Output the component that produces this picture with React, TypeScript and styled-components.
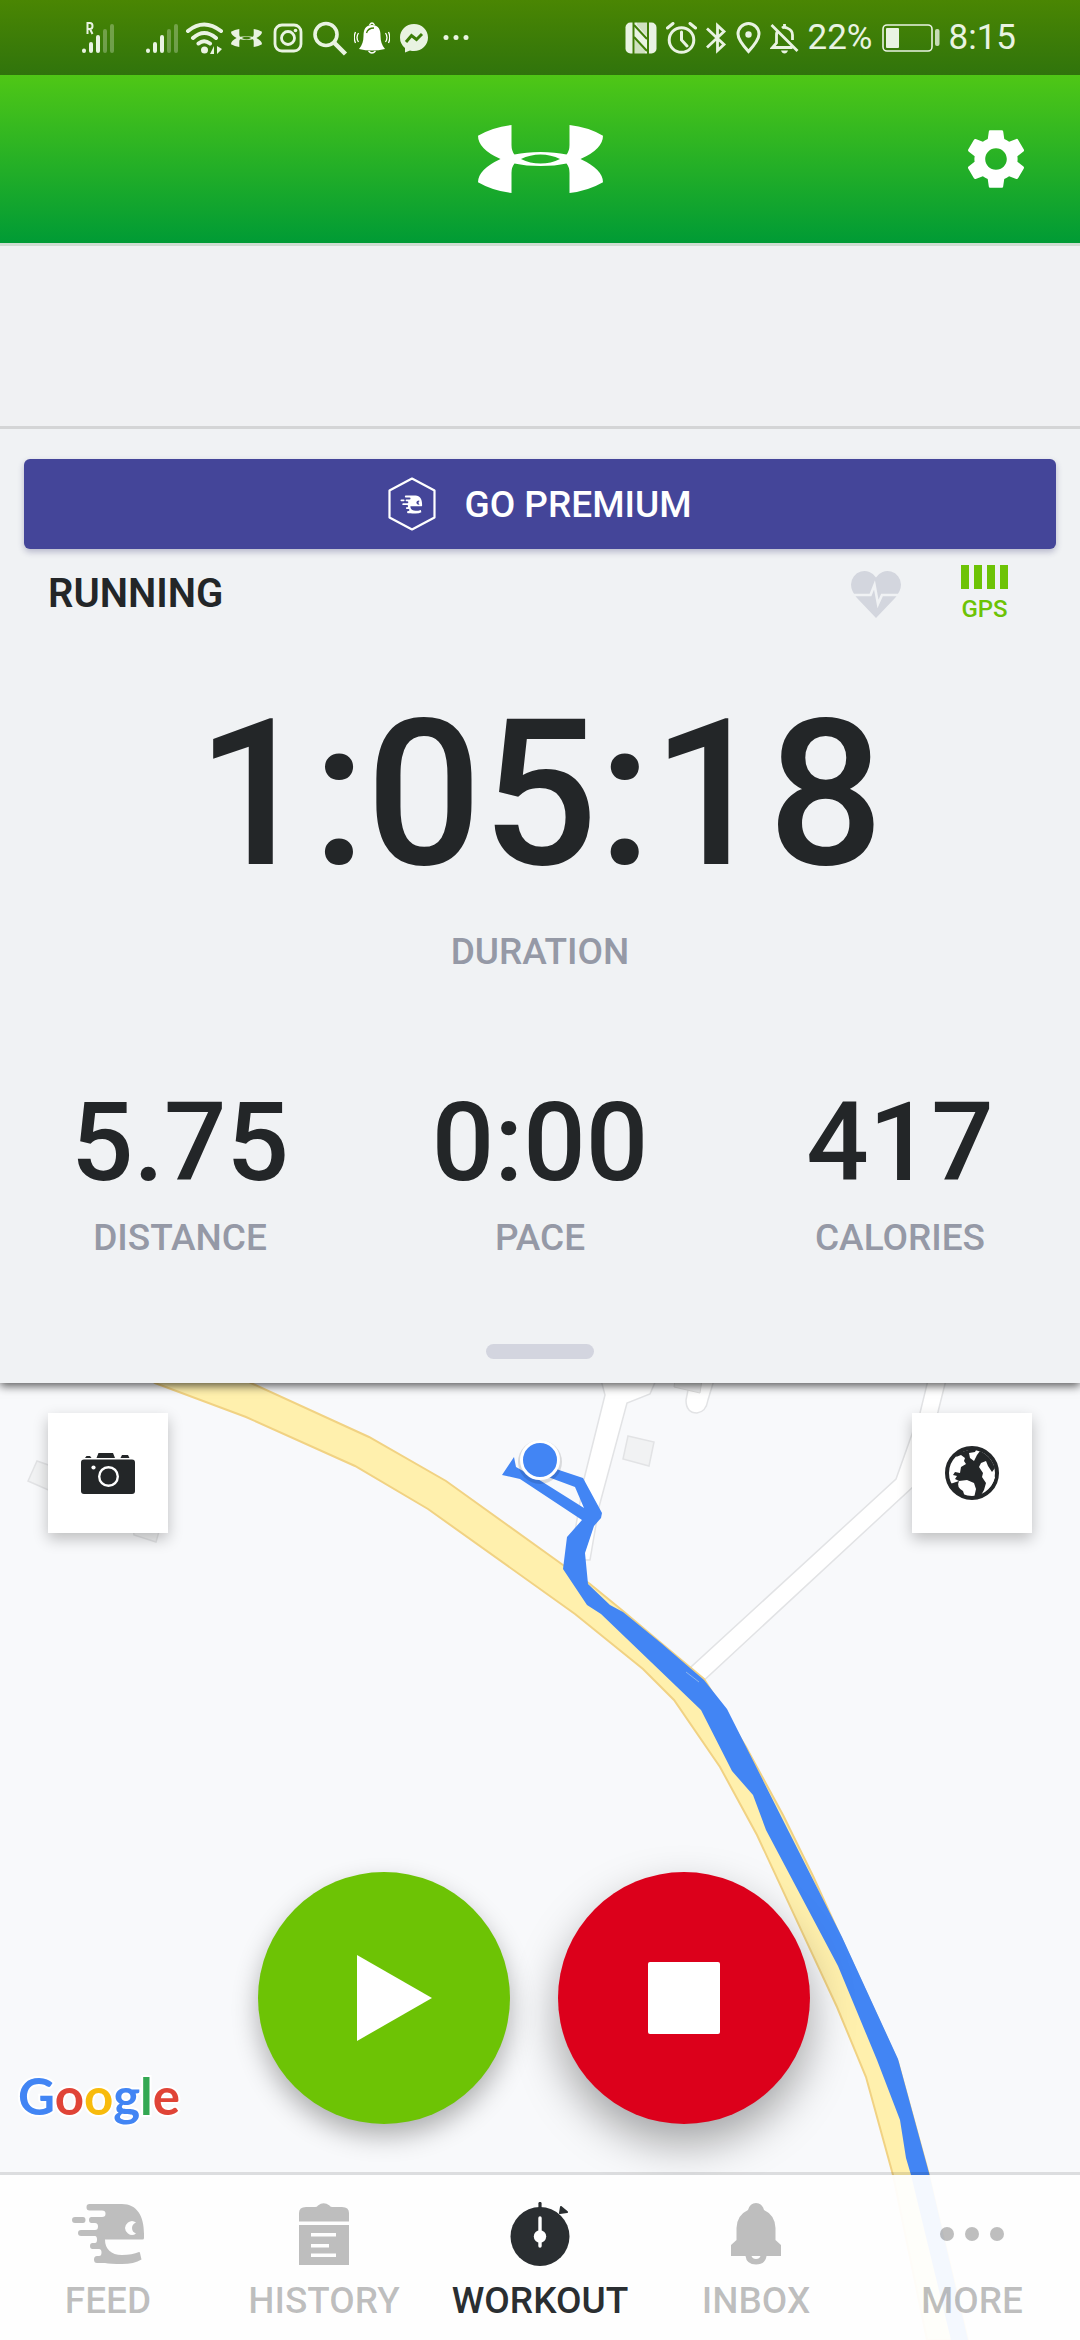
import React from "react";
import styled, { createGlobalStyle } from "styled-components";
import { MdSettings } from "react-icons/md";

const GlobalStyle = createGlobalStyle`
  *, *::before, *::after { box-sizing: border-box; }
  body { margin: 0; background: #f8f9fb; font-family: Roboto, "Liberation Sans", sans-serif; }
  button { font-family: inherit; border: 0; padding: 0; background: none; cursor: pointer; }
  svg { display: block; flex: none; }
`;

const ink = "#232628";
const muted = "#9599a6";
const green = "#6dc305";

const Page = styled.div`
  display: flex;
  flex-direction: column;
  min-height: 100vh;
  color: ${ink};
`;

const StatusBar = styled.div`
  display: flex;
  align-items: center;
  justify-content: space-between;
  height: 75px;
  padding: 0 64px 0 77px;
  background: linear-gradient(#4a8603, #30740c);
  color: #e9f3e2;
`;

const StatusLeft = styled.div`
  display: flex;
  align-items: center;
`;

const StatusCell = styled.span<{ $wide?: boolean }>`
  display: flex;
  justify-content: center;
  width: ${(p) => (p.$wide ? 64 : 42)}px;
  padding-right: ${(p) => (p.$wide ? 22 : 0)}px;
`;

const StatusRight = styled.div`
  display: flex;
  align-items: center;
  gap: 9px;
  font-size: 35px;
  line-height: 44px;
`;

const Header = styled.header`
  display: grid;
  grid-template-columns: 1fr auto 1fr;
  align-items: center;
  height: 171px;
  padding: 0 48px;
  background: linear-gradient(#4fc716, #009b35);
  background-clip: padding-box;
  border-bottom: 3px solid #cfdcd2;
  color: #fff;
`;

const SettingsButton = styled.button`
  grid-column: 3;
  justify-self: end;
  color: inherit;
`;

const HeaderLogo = styled.span`
  grid-column: 2;
`;

const AdSlot = styled.div`
  position: relative;
  z-index: 2;
  height: 183px;
  background: #f0f1f3;
  border-bottom: 3px solid #d4d5d6;
`;

const Panel = styled.section`
  position: relative;
  z-index: 1;
  display: flex;
  flex-direction: column;
  padding: 30px 0 24px;
  background: #f0f2f4;
  box-shadow: 0 3px 9px rgba(0, 0, 0, 0.65);
  clip-path: inset(0 0 -20px 0);
`;

const PremiumButton = styled.button`
  display: flex;
  align-items: center;
  justify-content: center;
  gap: 28px;
  height: 90px;
  margin: 0 24px;
  border-radius: 6px;
  background: #444599;
  color: #fff;
  font-size: 37px;
  font-weight: 500;
  box-shadow: 0 3px 6px rgba(50, 50, 110, 0.3);
`;

const ActivityRow = styled.div`
  display: flex;
  align-items: center;
  padding: 16px 72px 0 48px;
`;

const ActivityName = styled.h1`
  flex: 1;
  margin: 0;
  font-size: 40px;
  font-weight: 600;
  line-height: 56px;
`;

const Gps = styled.div`
  display: flex;
  flex-direction: column;
  align-items: center;
  gap: 6px;
  margin-left: 60px;
  color: ${green};
  font-size: 24px;
  font-weight: 500;
  line-height: 28px;
`;

const GpsBars = styled.div`
  display: flex;
  gap: 5px;
`;

const GpsBar = styled.i`
  width: 8px;
  height: 24px;
  background: currentColor;
`;

const Stat = styled.div<{ $main?: boolean }>`
  display: flex;
  flex-direction: column;
  align-items: center;
  gap: ${(p) => (p.$main ? 35 : 13)}px;
  margin-top: ${(p) => (p.$main ? 72 : 0)}px;
`;

const StatValue = styled.strong<{ $main?: boolean }>`
  font-size: ${(p) => (p.$main ? 204 : 110)}px;
  line-height: ${(p) => (p.$main ? 200 : 120)}px;
  font-weight: 500;
`;

const StatLabel = styled.span`
  color: ${muted};
  font-size: 37px;
  font-weight: 500;
  line-height: 44px;
`;

const StatsRow = styled.div`
  display: grid;
  grid-template-columns: repeat(3, 1fr);
  margin-top: 109px;
`;

const Handle = styled.div`
  align-self: center;
  width: 108px;
  height: 15px;
  margin-top: 84px;
  border-radius: 8px;
  background: #d3d5df;
`;

const MapArea = styled.main`
  position: relative;
  flex: 1;
  display: flex;
  flex-direction: column;
`;

const MapCanvas = styled.svg`
  position: absolute;
  inset: 0;
  width: 100%;
  height: 100%;
`;

const MapTools = styled.div`
  position: relative;
  display: flex;
  justify-content: space-between;
  padding: 30px 48px;
`;

const ToolButton = styled.button`
  display: grid;
  place-items: center;
  width: 120px;
  height: 120px;
  background: #fff;
  color: ${ink};
  box-shadow: 0 6px 14px rgba(0, 0, 0, 0.24);
`;

const Controls = styled.div`
  position: relative;
  display: flex;
  justify-content: center;
  gap: 48px;
  margin-top: auto;
  padding: 0 12px 48px 0;
`;

const RoundButton = styled.button<{ $color: string; $raised?: boolean }>`
  display: grid;
  place-items: center;
  width: 252px;
  height: 252px;
  border-radius: 50%;
  background: ${(p) => p.$color};
  box-shadow: ${(p) =>
    p.$raised ? "0 20px 44px rgba(0, 0, 0, 0.34)" : "0 12px 26px rgba(0, 0, 0, 0.3)"};
`;

const MapCredit = styled.span`
  position: absolute;
  left: 18px;
  bottom: 214px;
  font-family: Lato, "Liberation Sans", sans-serif;
  font-size: 51px;
  font-weight: 700;
  line-height: 60px;
  paint-order: stroke;
  -webkit-text-stroke: 4px #fff;
`;

const Letter = styled.span<{ $color: string }>`
  color: ${(p) => p.$color};
`;

const Nav = styled.nav`
  position: relative;
  display: grid;
  grid-template-columns: repeat(5, 1fr);
  height: 168px;
  border-top: 3px solid rgba(0, 0, 0, 0.11);
  background: rgba(254, 254, 254, 0.95);
  background-clip: padding-box;
`;

const NavItem = styled.button<{ $active?: boolean }>`
  display: flex;
  flex-direction: column;
  align-items: center;
  gap: 8px;
  padding-top: 22px;
  color: ${(p) => (p.$active ? "#2a2e31" : "rgba(0, 0, 0, 0.25)")};
  font-size: 37px;
  font-weight: 500;
  line-height: 44px;
`;

const MarkPath =
  "M0 10.7Q15 2 33.5 0V20Q33.5 26 36.5 29.5Q48 27 62.5 27T88.5 29.5Q91.5 26 91.5 20V0Q110 2 125 10.7Q125 24 102.5 34Q125 44.500 125 57.300Q110 66 91.500 68V48Q91.500 42 88.500 38.500Q77 41 62.500 41T36.500 38.500Q33.500 42 33.500 48V68Q15 66 0 57.300Q0 44.500 22.500 34Q0 24 0 10.700ZM43 34Q52 38.500 62.500 38.500T82 34Q73 29.500 62.500 29.500T43 34Z";

const Mark = ({ width, height }: { width: number; height: number }) => (
  <svg width={width} height={height} viewBox="0 0 125 68" preserveAspectRatio="none" fill="currentColor" fillRule="evenodd">
    <path d={MarkPath} />
  </svg>
);

const Signal = ({ roaming }: { roaming?: boolean }) => (
  <svg width="36" height="34" viewBox="0 0 36 34" stroke="currentColor" strokeWidth="4" strokeLinecap="round">
    <path d="M4 29.500V30M11 23V30M18 16V30" />
    <path d="M25 10V30M32 5V30" opacity=".3" />
    {roaming && <path d="M7.500 13V2H10Q12.500 2 12.500 5T10 8H8M10 8L12.500 13" fill="none" strokeWidth="2" strokeLinecap="butt" />}
  </svg>
);

const Wifi = () => (
  <svg width="40" height="34" viewBox="0 0 40 34" fill="none" stroke="currentColor" strokeWidth="4" strokeLinecap="round">
    <path d="M4 10Q20-3 37 10M9 17Q20 7 32 17M14.500 22.500Q20 18 26 22.500" />
    <circle cx="20.500" cy="29" r="3.500" fill="currentColor" stroke="none" />
    <path d="M30 25V33H26ZM33 25V33L38 28Z" fill="currentColor" stroke="none" />
  </svg>
);

const Camera = () => (
  <svg width="30" height="30" viewBox="0 0 30 30" fill="none" stroke="currentColor" strokeWidth="2.800">
    <rect x="2" y="2" width="26" height="26" rx="7" />
    <circle cx="15" cy="15" r="6.500" />
    <circle cx="22.500" cy="7.500" r="1.800" fill="currentColor" stroke="none" />
  </svg>
);

const Search = () => (
  <svg width="36" height="36" viewBox="0 0 36 36" fill="none" stroke="currentColor" strokeWidth="3.600">
    <circle cx="14" cy="14.500" r="11" />
    <path d="M22 22.500L33.500 34" strokeWidth="4.500" />
  </svg>
);

const RingingBell = () => (
  <svg width="36" height="32" viewBox="0 0 36 32" fill="#fff">
    <path d="M18 3C25 3 26.500 8 26.500 14Q26.500 22 31 27Q18 30 5 27Q9.500 22 9.500 14C9.500 8 11 3 18 3Z" />
    <path d="M15.500 3Q18-1 20.500 3M14.500 29Q18 33 21.500 29M4.500 11Q1.500 15.500 4.500 20M1.500 10Q-1 15.500 1.500 21M31.500 11Q34.500 15.500 31.500 20M34.500 10Q37 15.500 34.500 21" fill="none" stroke="#fff" strokeWidth="1.300" />
    <path d="M12.500 11Q14 6 20 6" fill="none" stroke="#427f05" strokeWidth="1.300" />
  </svg>
);

const Messenger = () => (
  <svg width="30" height="30" viewBox="0 0 30 30" fill="currentColor">
    <path d="M15 1C23 1 29 7 29 14.500S23 28 15 28Q13 28 11 27.500L6 29.500V25Q1 21 1 14.500C1 7 7 1 15 1Z" />
    <path d="M7 19L12.500 12.500L17.500 16.500L23 11" fill="none" stroke="#3c7d08" strokeWidth="3" />
  </svg>
);

const Ellipsis = ({ width, r, gap }: { width: number; r: number; gap: number }) => (
  <svg width={width} height={r * 2} viewBox={`0 0 ${width} ${r * 2}`} fill="currentColor">
    {[-1, 0, 1].map((n) => (
      <circle key={n} cx={width / 2 + n * gap} cy={r} r={r} />
    ))}
  </svg>
);

const Nfc = () => (
  <svg width="32" height="32" viewBox="0 0 32 32">
    <rect x=".5" y=".5" width="31" height="31" rx="5" fill="currentColor" />
    <path d="M8.500 0V32M23 0V32" stroke="#407e07" strokeWidth="2" fill="none" />
    <path d="M9 3L22 17M9 15L22 29" stroke="#407e07" strokeWidth="2" fill="none" />
    <path d="M9.500 17L20 28V32H9.500ZM12 0H22V14L12 3Z" fill="#407e07" opacity=".15" />
  </svg>
);

const Alarm = () => (
  <svg width="31" height="32" viewBox="0 0 31 32" fill="none" stroke="currentColor" strokeWidth="3">
    <circle cx="15.500" cy="18" r="12.300" />
    <path d="M15.500 10V18L21 24M1.500 6L7 1.500M29.500 6L24 1.500" strokeLinecap="round" />
  </svg>
);

const Bluetooth = () => (
  <svg width="21" height="32" viewBox="0 0 21 32" fill="none" stroke="currentColor" strokeWidth="2.800">
    <path d="M1 6.500L18 22.500L11.500 28.500V3.500L18 9.500L1 25.500" />
  </svg>
);

const Pin = () => (
  <svg width="25" height="32" viewBox="0 0 25 32" fill="none" stroke="currentColor" strokeWidth="3">
    <path d="M12.500 29.500Q2 18 2 12A10.500 10.500 0 0 1 23 12Q23 18 12.500 29.500Z" />
    <circle cx="12.500" cy="12.500" r="3.200" fill="currentColor" stroke="none" />
  </svg>
);

const BellOff = () => (
  <svg width="29" height="32" viewBox="0 0 29 32" fill="none" stroke="currentColor" strokeWidth="2.800">
    <path d="M1.500 3L27.500 29M22.500 25.500H2.500L6.500 21V13Q6.500 11 7.500 9M12 6Q14 4.500 17 6Q22.500 8 22.500 13V18M14.500 5V2" />
    <path d="M11 28.500H18Q17 31.500 14.500 31.500T11 28.500Z" fill="currentColor" stroke="none" />
  </svg>
);

const Battery = () => (
  <svg width="58" height="30" viewBox="0 0 58 30" fill="none">
    <rect x="1" y="2" width="49" height="26" rx="4" stroke="currentColor" strokeWidth="1.600" />
    <rect x="4" y="5" width="13" height="20" rx="1" fill="currentColor" />
    <rect x="53" y="6" width="4.500" height="17" rx="2" fill="currentColor" opacity=".8" />
  </svg>
);

const FaceShape =
  "M17.500 0H50C65 0 72 12 72 30V34Q72 35.500 70.500 35.500H33C33 45 39 51 50 51Q60 51 67 48Q68 48 68 49L69.500 55.500Q62 60 50 60Q38 60 33 59H25Q22 59 22 55.500T25 52H27Q29.500 52 29.500 48.500T27 45H20.500Q18 45 18 42T20.500 39H23Q25 39 25 35.500T23 32H9Q6 32 6 29T9 26H23Q26 26 26 22.500T23 19H19.500Q17 19 17 16T19.500 13H30Q33.500 13 33.500 9.700T30 6.400H17.500Q14.500 6.400 14.500 3.200T17.500 0ZM3 13H11Q13.500 13 13.500 16T11 19H3Q0 19 0 16T3 13ZM64 18.500Q60 15.500 56 18.500Q53 21 53 24T56 29.500Q60 32.500 64 29.500Q60 28 60 24T64 18.500Z";

const Face = ({ width, height }: { width: number; height: number }) => (
  <svg width={width} height={height} viewBox="0 0 72 60" fill="currentColor" fillRule="evenodd">
    <path d={FaceShape} />
  </svg>
);

const PremiumBadge = () => (
  <svg width="48" height="54" viewBox="0 0 48 54" fill="none">
    <path d="M24 1.500L46.500 13.500V40.500L24 52.500L1.500 40.500V13.500Z" stroke="#fff" strokeWidth="2.200" strokeLinejoin="round" />
    <path d={FaceShape} transform="translate(12.500 18.500) scale(.3)" fill="#fff" fillRule="evenodd" />
  </svg>
);

const HeartRate = () => (
  <svg width="50" height="47" viewBox="0 0 50 47">
    <path d="M25 47L6 27Q0 20 0 13.500A13.500 13.500 0 0 1 25 6.500A13.500 13.500 0 0 1 50 13.500Q50 20 44 27Z" fill="#d3d6de" />
    <path d="M2 24H19.500L23.500 14L27 33L31 24H48" fill="none" stroke="#f0f2f4" strokeWidth="2.600" />
  </svg>
);

const PhotoIcon = () => (
  <svg width="54" height="41" viewBox="0 0 54 41">
    <path d="M15.500 5L17.500 0H32L34 5ZM4 5L5.500 3H9L10.500 5ZM39.500 5L41 2H47L48.500 5Z" fill="currentColor" />
    <rect y="6.500" width="54" height="34.500" rx="3" fill="currentColor" />
    <circle cx="27.500" cy="23.500" r="9.300" fill="none" stroke="#fff" strokeWidth="2.400" />
    <circle cx="12.500" cy="14.500" r="2.100" fill="#fff" />
  </svg>
);

const GlobeIcon = () => (
  <svg width="54" height="54" viewBox="0 0 54 54">
    <circle cx="27" cy="27" r="25" fill="#fff" stroke="currentColor" strokeWidth="4" />
    <path d="M20 5L27 3L31 4L30 6L24 7L25 12L29 15L32 9L35 5Q46 10 50 22L47 26L43 20L41 15L36 17L34 21L38 27L37 31L41 37L39 44L35 51L29 52L31 43L29 37L22 34L14 35L10 33L12 30L8 29L10 26L15 27L16 21L21 18L19 15L20 12L16 9L11 11L13 7Z" fill="currentColor" />
    <path d="M14 35Q11 41 18 45L20 51Q10 48 5 38Z" fill="currentColor" />
    <path d="M47 29L44 36L40 45Q48 40 50 31Z" fill="#fff" />
  </svg>
);

const HistoryIcon = () => (
  <svg width="50" height="62" viewBox="0 0 50 62" fill="currentColor" fillRule="evenodd">
    <path d="M0 18.500V10Q0 4 7 4H16Q18 4 19 2.500Q24.500-2 30.500 2.500Q31.500 4 33.500 4H43Q50 4 50 10V18.500ZM0 22H50V62H0ZM12 30V33.500H37V30ZM12 41V44.500H30V41ZM12 50.500V54H37V50.500Z" />
  </svg>
);

const StopwatchIcon = () => (
  <svg width="60" height="64" viewBox="0 0 60 64">
    <circle cx="30" cy="34.500" r="29.500" fill="currentColor" />
    <path d="M30 1.500V8" stroke="currentColor" strokeWidth="3.200" strokeLinecap="round" />
    <path d="M51 5L57 10L50 11Z" fill="currentColor" stroke="currentColor" strokeWidth="2" strokeLinejoin="round" />
    <path d="M30 16V44" stroke="#fff" strokeWidth="3.400" strokeLinecap="round" />
    <circle cx="30" cy="34.500" r="6.200" fill="#fff" />
  </svg>
);

const BellIcon = () => (
  <svg width="50" height="62" viewBox="0 0 50 62" fill="currentColor">
    <path d="M17 7Q19 0 25 0T33 7Q44 12 44.500 25V37L50 42V53H35.500Q34.500 61.500 25 61.500T14.500 53H0V42L5.500 37V25Q6 12 17 7ZM20.500 53Q21.500 56 25 56T29.500 53Z" fillRule="evenodd" />
  </svg>
);

const WorkoutMap = () => (
  <MapCanvas viewBox="0 1383 1080 957" preserveAspectRatio="xMidYMin slice" role="img" aria-label="Route map">
    <rect y="1383" width="1080" height="957" fill="#f8f9fb" />
    <g fill="#f1f2f3" stroke="#e2e3e5" strokeWidth="1.500">
      <path d="M37 1461L60 1469L53 1492L28 1481Z" />
      <path d="M130 1500L165 1510L156 1542L134 1535Z" />
      <path d="M628 1436L654 1442L649 1466L623 1459Z" />
    </g>
    <g fill="#fff" stroke="#e2e3e5" strokeWidth="1.500">
      <path d="M601 1380L605 1395L584 1479L570 1560H590L599 1507L627 1403L650 1394L656 1380Z" />
      <path d="M690 1380L686 1400Q686 1413 697 1413Q706 1412 708 1400L714 1380Z" />
      <path d="M928 1380L920 1413L912 1434L896 1479L691 1667L700 1684L915 1485L930 1440L938 1412L946 1380Z" />
    </g>
    <path d="M675 1380L674 1387L700 1393L702 1380Z" fill="#ebeced" stroke="#ddd" />
    <path
      d="M150 1380L155 1383L246 1417L355 1466L428 1509L575 1614L643 1669L674 1700L720 1767L757 1835L837 2007L866 2077L893 2175L927 2340H968L929 2175L898 2062L842 1940L813 1876L783 1815L746 1747L704 1679L661 1643L623 1611L590 1584L563 1565L446 1481L369 1437L251 1383L245 1380Z"
      fill="#fff0ad"
      stroke="#f1d283"
      strokeWidth="2"
    />
    <path
      d="M559 1470L583 1478L602 1513L601 1518L594 1526L585 1553L588 1584L610 1605L623 1612L661 1643L704 1680L727 1709L842 1937L898 2059L929 2173L968 2340H951L911 2175L906 2158L900 2120L877 2060L838 1966L766 1830L753 1795L732 1771L701 1710L601 1614L587 1605L563 1569L567 1537L582 1520L520 1479L502 1475L514 1457L516 1467L541 1481L584 1508L575 1487L540 1474V1460Z"
      fill="#4285f4"
    />
    <path d="M686 1672L699 1682" stroke="#8db5ea" />
    <circle cx="540" cy="1462" r="22" fill="#000" opacity=".12" />
    <circle cx="540" cy="1460" r="18.500" fill="#4285f4" stroke="#fff" strokeWidth="3" />
  </MapCanvas>
);

const stats = [
  { value: "5.75", label: "DISTANCE" },
  { value: "0:00", label: "PACE" },
  { value: "417", label: "CALORIES" },
];

const tabs = [
  { label: "FEED", icon: <Face width={72} height={64} /> },
  { label: "HISTORY", icon: <HistoryIcon /> },
  { label: "WORKOUT", icon: <StopwatchIcon />, active: true },
  { label: "INBOX", icon: <BellIcon /> },
  { label: "MORE", icon: <Ellipsis width={64} r={7} gap={25} /> },
];

const IconSlot = styled.span`
  display: flex;
  align-items: center;
  height: 74px;
`;

const credit: [string, string][] = [
  ["G", "#4285f4"],
  ["o", "#e04437"],
  ["o", "#f8bb0c"],
  ["g", "#4285f4"],
  ["l", "#34a853"],
  ["e", "#e04437"],
];

export default function App() {
  return (
    <Page>
      <GlobalStyle />
      <StatusBar>
        <StatusLeft>
          <StatusCell $wide><Signal roaming /></StatusCell>
          <StatusCell><Signal /></StatusCell>
          <StatusCell><Wifi /></StatusCell>
          <StatusCell><Mark width={31} height={18} /></StatusCell>
          <StatusCell><Camera /></StatusCell>
          <StatusCell><Search /></StatusCell>
          <StatusCell><RingingBell /></StatusCell>
          <StatusCell><Messenger /></StatusCell>
          <StatusCell><Ellipsis width={26} r={2.5} gap={10} /></StatusCell>
        </StatusLeft>
        <StatusRight>
          <Nfc />
          <Alarm />
          <Bluetooth />
          <Pin />
          <BellOff />
          <span>22%</span>
          <Battery />
          <span>8:15</span>
        </StatusRight>
      </StatusBar>

      <Header>
        <HeaderLogo><Mark width={125} height={68} /></HeaderLogo>
        <SettingsButton aria-label="Settings"><MdSettings size={72} /></SettingsButton>
      </Header>

      <AdSlot />

      <Panel>
        <PremiumButton>
          <PremiumBadge />
          GO PREMIUM
        </PremiumButton>
        <ActivityRow>
          <ActivityName>RUNNING</ActivityName>
          <HeartRate />
          <Gps>
            <GpsBars><GpsBar /><GpsBar /><GpsBar /><GpsBar /></GpsBars>
            GPS
          </Gps>
        </ActivityRow>
        <Stat $main>
          <StatValue $main>1:05:18</StatValue>
          <StatLabel>DURATION</StatLabel>
        </Stat>
        <StatsRow>
          {stats.map((s) => (
            <Stat key={s.label}>
              <StatValue>{s.value}</StatValue>
              <StatLabel>{s.label}</StatLabel>
            </Stat>
          ))}
        </StatsRow>
        <Handle />
      </Panel>

      <MapArea>
        <WorkoutMap />
        <MapTools>
          <ToolButton aria-label="Take photo"><PhotoIcon /></ToolButton>
          <ToolButton aria-label="Map type"><GlobeIcon /></ToolButton>
        </MapTools>
        <Controls>
          <RoundButton $color={green} aria-label="Resume">
            <svg width="96" height="86" viewBox="0 0 96 86" fill="#fff"><path d="M21 0L96 43L21 86Z" /></svg>
          </RoundButton>
          <RoundButton $color="#dc001b" $raised aria-label="Stop">
            <svg width="72" height="72" viewBox="0 0 72 72" fill="#fff"><rect width="72" height="72" rx="2" /></svg>
          </RoundButton>
        </Controls>
        <MapCredit>
          {credit.map(([char, color], i) => (
            <Letter key={i} $color={color}>{char}</Letter>
          ))}
        </MapCredit>
        <Nav>
          {tabs.map((t) => (
            <NavItem key={t.label} $active={t.active} aria-current={t.active ? "page" : undefined}>
              <IconSlot>{t.icon}</IconSlot>
              {t.label}
            </NavItem>
          ))}
        </Nav>
      </MapArea>
    </Page>
  );
}
